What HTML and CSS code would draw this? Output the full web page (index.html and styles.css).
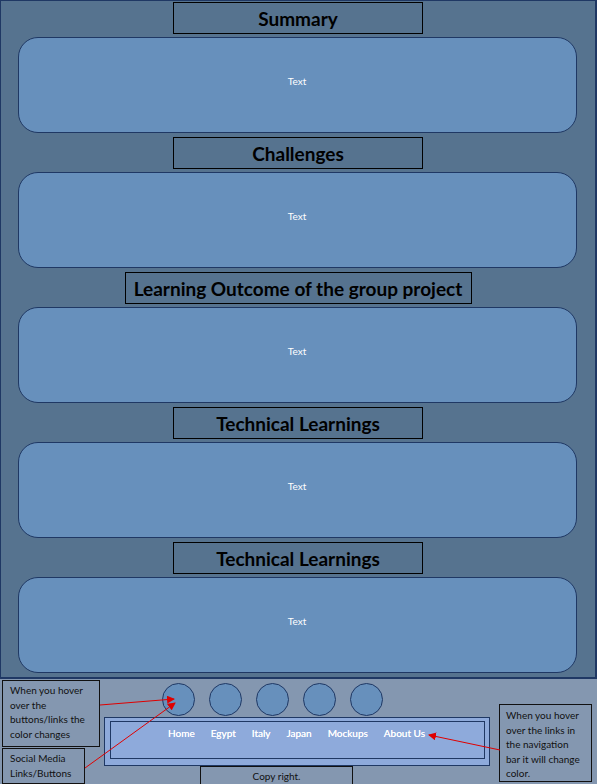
FILE: index.html
```html
<!DOCTYPE html>
<html>
<head>
<meta charset="utf-8">
<link rel="stylesheet" href="styles.css">
</head>
<body>
<main class="main">
  <section class="block">
    <h2 class="heading">Summary</h2>
    <div class="card">Text</div>
  </section>
  <section class="block">
    <h2 class="heading">Challenges</h2>
    <div class="card">Text</div>
  </section>
  <section class="block">
    <h2 class="heading heading-wide">Learning Outcome of the group project</h2>
    <div class="card">Text</div>
  </section>
  <section class="block">
    <h2 class="heading">Technical Learnings</h2>
    <div class="card">Text</div>
  </section>
  <section class="block">
    <h2 class="heading">Technical Learnings</h2>
    <div class="card">Text</div>
  </section>
</main>
<footer class="footer">
  <div class="socials">
    <span class="circle"></span>
    <span class="circle"></span>
    <span class="circle"></span>
    <span class="circle"></span>
    <span class="circle"></span>
  </div>
  <nav class="nav">
    <div class="nav-inner">
      <a class="nav-link">Home</a>
      <a class="nav-link">Egypt</a>
      <a class="nav-link">Italy</a>
      <a class="nav-link">Japan</a>
      <a class="nav-link">Mockups</a>
      <a class="nav-link">About Us</a>
    </div>
  </nav>
  <div class="copy">Copy right.</div>
  <div class="note note-1">When you hover over the buttons/links the color changes</div>
  <div class="note note-2">Social Media Links/Buttons</div>
  <div class="note note-3">When you hover over the links in the navigation bar it will change color.</div>
  <svg class="arrows" width="597" height="106" viewBox="0 678 597 106">
    <defs>
      <marker id="ah" markerWidth="8" markerHeight="8" refX="7" refY="4" orient="auto" markerUnits="userSpaceOnUse">
        <path d="M0,0 L8,4 L0,8 Z" fill="#e00000"/>
      </marker>
    </defs>
    <line x1="100" y1="704" x2="174" y2="698" stroke="#e00000" stroke-width="1" marker-end="url(#ah)"/>
    <line x1="85" y1="767" x2="175" y2="702" stroke="#e00000" stroke-width="1" marker-end="url(#ah)"/>
    <line x1="500" y1="749" x2="429" y2="734" stroke="#e00000" stroke-width="1" marker-end="url(#ah)"/>
  </svg>
</footer>
</body>
</html>
```
FILE: styles.css
```css
* { box-sizing: border-box; }
html, body { margin: 0; padding: 0; }
body {
  width: 597px;
  height: 784px;
  overflow: hidden;
  font-family: Lato, "Open Sans", "Liberation Sans", sans-serif;
  background: #8497b0;
}
.main {
  width: 597px;
  background: #56738f;
  border: 1px solid #1f3864;
  border-right-width: 2px;
  border-bottom-width: 2px;
  padding: 1px 0 3px 0;
  display: flex;
  flex-direction: column;
  gap: 4px;
  height: 679px;
}
.block {
  display: flex;
  flex-direction: column;
  align-items: center;
  gap: 3px;
}
.heading {
  margin: 0;
  width: 250px;
  height: 32px;
  border: 1px solid #000;
  background: #56738f;
  color: #000;
  font-size: 19px;
  font-weight: 700;
  display: flex;
  align-items: center;
  justify-content: center;
}
.heading-wide { width: 347px; }
.card {
  width: 559px;
  height: 96px;
  margin-left: -2px;
  background: #6790bc;
  border: 1px solid #1f3864;
  border-radius: 20px;
  color: #fff;
  font-size: 10px;
  display: flex;
  align-items: center;
  justify-content: center;
  padding-bottom: 8px;
}
.footer {
  position: relative;
  height: 105px;
  background: #8497b0;
}
.socials {
  display: flex;
  gap: 14px;
  padding: 4px 0 0 162px;
}
.circle {
  width: 33px;
  height: 33px;
  border-radius: 50%;
  background: #6790bc;
  border: 1px solid #1f3864;
}
.nav {
  margin: 1px 0 0 104px;
  width: 386px;
  height: 49px;
  background: #8eaadb;
  border: 1px solid #1f3864;
  padding: 3px 4px 6px 5px;
}
.nav-inner {
  height: 100%;
  border: 1px solid #1f3864;
  display: flex;
  gap: 16px;
  padding: 5px 0 0 57px;
}
.nav-link {
  color: #fff;
  font-size: 10px;
  font-weight: 400;
  line-height: 12px;
  text-shadow: 0 0 0.3px #fff;
}
.copy {
  margin-left: 200px;
  width: 153px;
  height: 20px;
  border: 1px solid #111;
  font-size: 10px;
  color: #111;
  text-align: center;
  padding-top: 3px;
}
.note {
  position: absolute;
  background: #8497b0;
  border: 1px solid #111;
  font-size: 10px;
  line-height: 14.6px;
  color: #111;
  padding: 2px 7px;
}
.note-1 { left: 2px; top: 1px; width: 98px; height: 67px; }
.note-2 { left: 2px; top: 69px; width: 83px; height: 36px; }
.note-3 { left: 499px; top: 25px; width: 93px; height: 78px; padding: 3px 6px; }
.arrows {
  position: absolute;
  left: 0;
  top: 0;
  pointer-events: none;
}
```
